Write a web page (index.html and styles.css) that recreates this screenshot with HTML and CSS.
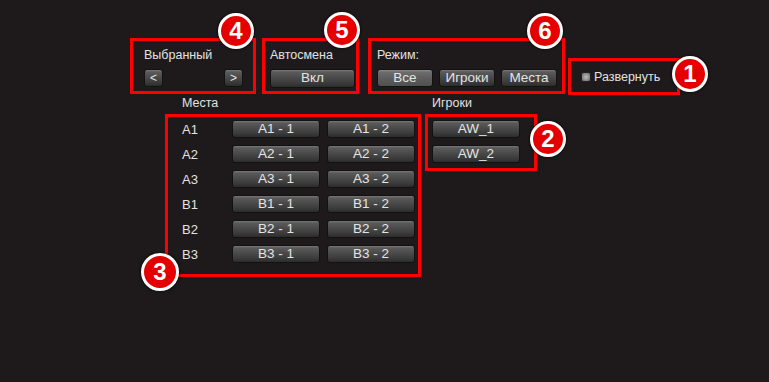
FILE: index.html
```html
<!DOCTYPE html>
<html lang="ru">
  <head>
    <meta charset="UTF-8" />
    <meta name="viewport" content="width=device-width, initial-scale=1.0" />
    <title>Панель</title>
    <link rel="stylesheet" href="styles.css">
  </head>
  <body>
    <div class="page">
      <div class="top-row">
        <div class="mark selected">
          <div class="caption">Выбранный</div>
          <div class="nav">
            <div class="btn small">&lt;</div>
            <div class="btn small">&gt;</div>
          </div>
          <div class="badge b4">4</div>
        </div>
        <div class="mark auto">
          <div class="caption">Автосмена</div>
          <div class="btn wide">Вкл</div>
          <div class="badge b5">5</div>
        </div>
        <div class="mark mode">
          <div class="caption">Режим:</div>
          <div class="modes">
            <div class="btn mode-btn active">Все</div>
            <div class="btn mode-btn">Игроки</div>
            <div class="btn mode-btn">Места</div>
          </div>
          <div class="badge b6">6</div>
        </div>
        <div class="mark expand">
          <span class="check"></span>
          <span>Развернуть</span>
          <div class="badge b1">1</div>
        </div>
      </div>

      <div class="bottom-row">
        <div class="col places-col">
          <div class="label">Места</div>
          <div class="mark places">
            <div class="seat-name">A1</div>
            <div class="btn seat">A1 - 1</div>
            <div class="btn seat">A1 - 2</div>
            <div class="seat-name">A2</div>
            <div class="btn seat">A2 - 1</div>
            <div class="btn seat">A2 - 2</div>
            <div class="seat-name">A3</div>
            <div class="btn seat">A3 - 1</div>
            <div class="btn seat">A3 - 2</div>
            <div class="seat-name">B1</div>
            <div class="btn seat">B1 - 1</div>
            <div class="btn seat">B1 - 2</div>
            <div class="seat-name">B2</div>
            <div class="btn seat">B2 - 1</div>
            <div class="btn seat">B2 - 2</div>
            <div class="seat-name">B3</div>
            <div class="btn seat">B3 - 1</div>
            <div class="btn seat">B3 - 2</div>
            <div class="badge b3">3</div>
          </div>
        </div>
        <div class="col players-col">
          <div class="label">Игроки</div>
          <div class="mark players">
            <div class="btn seat">AW_1</div>
            <div class="btn seat">AW_2</div>
            <div class="badge b2">2</div>
          </div>
        </div>
      </div>
    </div>
  </body>
</html>
```

FILE: styles.css
```css
body {
  margin: 0;
  background-color: #1e1a1b;
  color: #e2e2e2;
  font-family: "Liberation Sans", Arial, sans-serif;
  font-size: 12px;
}
.page {
  padding: 38px 0 0 130px;
  height: 344px;
}
.top-row {
  display: flex;
  align-items: flex-start;
}
.mark {
  position: relative;
  border: 3px solid #ff0000;
  box-sizing: border-box;
}

/* top groups */
.selected {
  width: 126px;
  height: 56px;
  padding: 7px 10px 0 11px;
}
.auto {
  width: 97px;
  height: 56px;
  margin-left: 6px;
  padding: 7px 0 0 5px;
}
.mode {
  width: 197px;
  height: 56px;
  margin-left: 9px;
  padding: 7px 0 0 6px;
}
.expand {
  width: 112px;
  height: 37px;
  margin-left: 3px;
  margin-top: 20px;
  display: flex;
  align-items: center;
  padding-left: 10px;
  padding-top: 1px;
  font-size: 12.5px;
}
.caption {
  height: 14px;
  line-height: 14px;
  margin-bottom: 7px;
  font-size: 12.5px;
}
.nav {
  display: flex;
  justify-content: space-between;
}
.modes {
  display: flex;
  gap: 6px;
}

.btn {
  box-sizing: border-box;
  height: 18px;
  line-height: 16px;
  text-align: center;
  color: #e4e4e4;
  font-size: 13.5px;
  border: 1px solid #121212;
  border-radius: 3px;
  background: linear-gradient(#7a7a7a 0, #5a5a5a 12%, #4a4a4a 45%, #3c3c3c 75%, #2c2c2c 100%);
}
.small {
  width: 19px;
  font-size: 12px;
}
.wide {
  width: 85px;
  height: 19px;
}
.mode-btn {
  width: 56px;
}
.active {
  background: linear-gradient(#8a8a8a 0, #6c6c6c 15%, #5e5e5e 50%, #505050 100%);
}
.check {
  width: 10px;
  height: 10px;
  margin-right: 3px;
  border-radius: 2px;
  border: 1px solid #222;
  box-sizing: border-box;
  background: radial-gradient(circle, #bdbdbd 0, #8a8a8a 60%, #5a5a5a 100%);
}

/* bottom */
.bottom-row {
  display: flex;
  gap: 4px;
  margin-left: 35px;
  margin-top: 2px;
}
.label {
  height: 17px;
  line-height: 13px;
  font-size: 12.5px;
}
.places-col .label {
  padding-left: 17px;
}
.players-col .label {
  padding-left: 7px;
}
.places {
  width: 256px;
  height: 163px;
  padding: 3px 2px 0 14px;
  display: grid;
  grid-template-columns: 43px 88px 88px;
  grid-auto-rows: 18px;
  column-gap: 7px;
  row-gap: 7px;
  align-items: center;
}
.seat-name {
  font-size: 13px;
}
.seat {
  width: 88px;
}
.players {
  width: 112px;
  height: 57px;
  padding: 3px 0 0 4px;
  display: flex;
  flex-direction: column;
  gap: 7px;
}

/* number badges */
.badge {
  position: absolute;
  width: 36px;
  height: 36px;
  box-sizing: border-box;
  border: 3px solid #fff;
  border-radius: 50%;
  background-color: #e40000;
  color: #fff;
  font-weight: bold;
  font-size: 24px;
  line-height: 30px;
  text-align: center;
  box-shadow: 0 0 3px #000;
  z-index: 2;
}
.b4 { left: 85px; top: -28px; }
.b5 { left: 59px; top: -29px; }
.b6 { left: 156px; top: -28px; }
.b1 { left: 101px; top: -5px; }
.b2 { left: 102px; top: 4px; }
.b3 { left: -27px; top: 136px; width: 38px; height: 38px; line-height: 32px; }
```
